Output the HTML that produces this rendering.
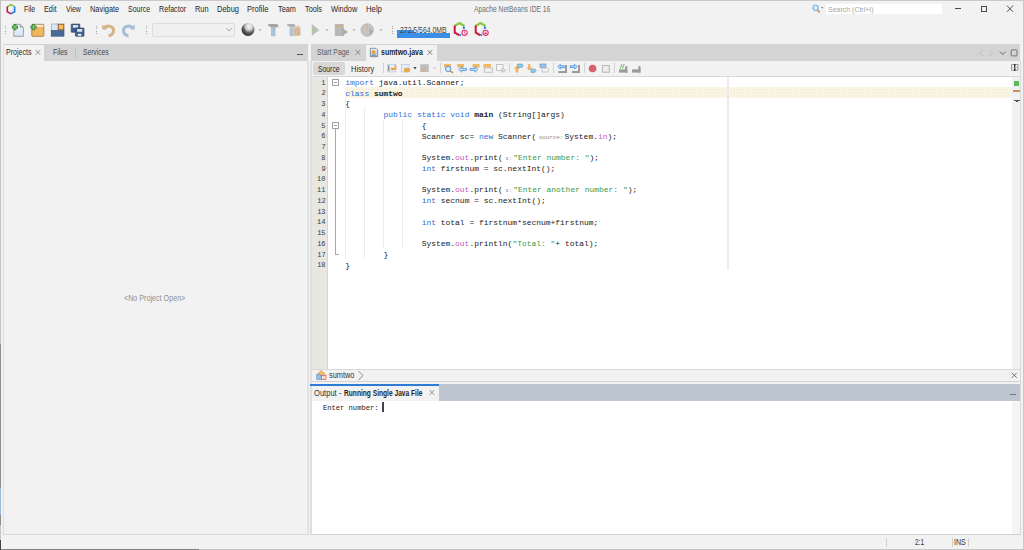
<!DOCTYPE html>
<html><head><meta charset="utf-8">
<style>
*{margin:0;padding:0;box-sizing:border-box}
html,body{width:1024px;height:550px;overflow:hidden;background:#f2f2f2;font-family:"Liberation Sans",sans-serif;color:#222;position:relative}
.a{position:absolute}
.t{position:absolute;white-space:pre}
svg{position:absolute;overflow:visible}
</style></head><body>
<div class="a" style="left:0px;top:0px;width:1024px;height:1px;background:#cacaca;"></div>
<div class="a" style="left:0px;top:0px;width:1px;height:550px;background:#c4c4c4;"></div>
<div class="a" style="left:1023px;top:0px;width:1px;height:550px;background:#c8c8c8;"></div>
<div class="a" style="left:0px;top:549px;width:199px;height:1px;background:#828282;"></div>
<div class="a" style="left:199px;top:549px;width:825px;height:1px;background:#c4c4c4;"></div>
<div class="a" style="left:0px;top:344px;width:1px;height:144px;background:#8e8e8e;"></div>
<div class="a" style="left:0px;top:488px;width:1px;height:27px;background:#9cbad8;"></div>
<div class="a" style="left:0px;top:515px;width:1px;height:10px;background:#8a8a8a;"></div>
<div class="a" style="left:0px;top:540px;width:1px;height:10px;background:#404048;"></div>
<svg style="left:5.5px;top:3px" width="10" height="12" viewBox="0 0 10 12">
<path d="M1.9 4.6 L5 2.8 L8.1 4.6 L8.1 8.4 L5 10.2 L1.9 8.4Z" fill="#f4f6f8"/>
<path d="M5 6.5 L8.1 4.6 L8.1 8.4 L5 10.2Z" fill="#dbe8f4"/>
<path d="M1.3 3.9 L5 1.6 L8.7 3.9" stroke="#8dc63f" stroke-width="1.7" fill="none" stroke-linejoin="round"/>
<path d="M1.3 3.6 L1.3 8.7 L5.2 10.9" stroke="#d2143c" stroke-width="1.6" fill="none"/>
<path d="M8.7 3.6 L8.7 8.7 L4.8 10.9" stroke="#2a7fdc" stroke-width="1.6" fill="none"/>
</svg>
<div class="t" style="left:24.33px;top:6.00px;font-size:8.2px;line-height:8.2px;color:#262626;font-family:'Liberation Sans',sans-serif;transform:scaleX(0.8453);transform-origin:0 0;">File</div>
<div class="t" style="left:44.20px;top:6.00px;font-size:8.2px;line-height:8.2px;color:#262626;font-family:'Liberation Sans',sans-serif;transform:scaleX(0.8871);transform-origin:0 0;">Edit</div>
<div class="t" style="left:66.27px;top:6.00px;font-size:8.2px;line-height:8.2px;color:#262626;font-family:'Liberation Sans',sans-serif;transform:scaleX(0.8338);transform-origin:0 0;">View</div>
<div class="t" style="left:90.09px;top:6.00px;font-size:8.2px;line-height:8.2px;color:#262626;font-family:'Liberation Sans',sans-serif;transform:scaleX(0.9035);transform-origin:0 0;">Navigate</div>
<div class="t" style="left:128.09px;top:6.00px;font-size:8.2px;line-height:8.2px;color:#262626;font-family:'Liberation Sans',sans-serif;transform:scaleX(0.8513);transform-origin:0 0;">Source</div>
<div class="t" style="left:159.01px;top:6.00px;font-size:8.2px;line-height:8.2px;color:#262626;font-family:'Liberation Sans',sans-serif;transform:scaleX(0.8744);transform-origin:0 0;">Refactor</div>
<div class="t" style="left:194.79px;top:6.00px;font-size:8.2px;line-height:8.2px;color:#262626;font-family:'Liberation Sans',sans-serif;transform:scaleX(0.9031);transform-origin:0 0;">Run</div>
<div class="t" style="left:216.99px;top:6.00px;font-size:8.2px;line-height:8.2px;color:#262626;font-family:'Liberation Sans',sans-serif;transform:scaleX(0.9103);transform-origin:0 0;">Debug</div>
<div class="t" style="left:247.28px;top:6.00px;font-size:8.2px;line-height:8.2px;color:#262626;font-family:'Liberation Sans',sans-serif;transform:scaleX(0.9232);transform-origin:0 0;">Profile</div>
<div class="t" style="left:277.94px;top:6.00px;font-size:8.2px;line-height:8.2px;color:#262626;font-family:'Liberation Sans',sans-serif;transform:scaleX(0.8896);transform-origin:0 0;">Team</div>
<div class="t" style="left:304.74px;top:6.00px;font-size:8.2px;line-height:8.2px;color:#262626;font-family:'Liberation Sans',sans-serif;transform:scaleX(0.8895);transform-origin:0 0;">Tools</div>
<div class="t" style="left:330.87px;top:6.00px;font-size:8.2px;line-height:8.2px;color:#262626;font-family:'Liberation Sans',sans-serif;transform:scaleX(0.9019);transform-origin:0 0;">Window</div>
<div class="t" style="left:365.96px;top:6.00px;font-size:8.2px;line-height:8.2px;color:#262626;font-family:'Liberation Sans',sans-serif;transform:scaleX(0.9458);transform-origin:0 0;">Help</div>
<div class="t" style="left:473.99px;top:6.00px;font-size:8.2px;line-height:8.2px;color:#6e6e6e;font-family:'Liberation Sans',sans-serif;transform:scaleX(0.8175);transform-origin:0 0;">Apache NetBeans IDE 16</div>
<div class="a" style="left:826px;top:4px;width:116px;height:10px;background:#ffffff;"></div>
<div class="t" style="left:827.99px;top:6.00px;font-size:7.4px;line-height:7.4px;color:#a4a4a4;font-family:'Liberation Sans',sans-serif;transform:scaleX(0.9445);transform-origin:0 0;">Search (Ctrl+I)</div>
<svg style="left:811px;top:4px" width="14" height="10" viewBox="0 0 14 10">
<circle cx="4.6" cy="3.8" r="2.8" fill="#d6e8fa" stroke="#5c9de4" stroke-width="0.9"/>
<path d="M6.6 6 L8.6 8.4" stroke="#cc8a44" stroke-width="1.6"/>
<path d="M10.3 3.3 L12.2 3.3 L11.25 4.4Z" fill="#333"/>
</svg>
<div class="a" style="left:955px;top:8px;width:6px;height:1px;background:#484848;"></div>
<div class="a" style="left:981px;top:6px;width:6px;height:6px;border:1px solid #484848"></div>
<svg style="left:1006px;top:5px" width="8" height="8" viewBox="0 0 8 8">
<path d="M0.9 0.6 L7.1 6.9 M7.1 0.6 L0.9 6.9" stroke="#484848" stroke-width="0.95"/></svg>
<div class="a" style="left:5px;top:26px;width:1px;height:1px;background:#a4a4a4"></div>
<div class="a" style="left:5px;top:28.4px;width:1px;height:1px;background:#a4a4a4"></div>
<div class="a" style="left:5px;top:30.8px;width:1px;height:1px;background:#a4a4a4"></div>
<div class="a" style="left:5px;top:33.2px;width:1px;height:1px;background:#a4a4a4"></div>
<div class="a" style="left:96px;top:26px;width:1px;height:1px;background:#a4a4a4"></div>
<div class="a" style="left:96px;top:28.4px;width:1px;height:1px;background:#a4a4a4"></div>
<div class="a" style="left:96px;top:30.8px;width:1px;height:1px;background:#a4a4a4"></div>
<div class="a" style="left:96px;top:33.2px;width:1px;height:1px;background:#a4a4a4"></div>
<div class="a" style="left:146px;top:26px;width:1px;height:1px;background:#a4a4a4"></div>
<div class="a" style="left:146px;top:28.4px;width:1px;height:1px;background:#a4a4a4"></div>
<div class="a" style="left:146px;top:30.8px;width:1px;height:1px;background:#a4a4a4"></div>
<div class="a" style="left:146px;top:33.2px;width:1px;height:1px;background:#a4a4a4"></div>
<div class="a" style="left:392px;top:26px;width:1px;height:1px;background:#a4a4a4"></div>
<div class="a" style="left:392px;top:28.4px;width:1px;height:1px;background:#a4a4a4"></div>
<div class="a" style="left:392px;top:30.8px;width:1px;height:1px;background:#a4a4a4"></div>
<div class="a" style="left:392px;top:33.2px;width:1px;height:1px;background:#a4a4a4"></div>
<svg style="left:11px;top:23px" width="14" height="14" viewBox="0 0 14 14">
<defs><linearGradient id="nd" x1="0" y1="0" x2="0" y2="1"><stop offset="0" stop-color="#f4f8fc"/><stop offset="1" stop-color="#d4e4f4"/></linearGradient></defs>
<path d="M2.8 1.3 L9.3 1.3 L12.3 4.3 L12.3 13.3 L2.8 13.3Z" fill="url(#nd)" stroke="#8c98a6" stroke-width="0.9"/>
<path d="M9.3 1.3 L9.3 4.3 L12.3 4.3" fill="#b8c6d6" stroke="#8c98a6" stroke-width="0.7"/>
<path d="M4 1 L4 7.2 M0.9 4.1 L7.1 4.1" stroke="#2f7f3a" stroke-width="2.6"/><path d="M4 1.8 L4 6.4 M1.7 4.1 L6.3 4.1" stroke="#8fd860" stroke-width="1"/>
</svg>
<svg style="left:29px;top:23px" width="16" height="14" viewBox="0 0 16 14">
<rect x="2.8" y="1.3" width="12" height="12" rx="0.8" fill="#f2b75e" stroke="#a57a4a" stroke-width="0.9"/>
<rect x="3.4" y="1.8" width="11" height="2.2" fill="#f6ead0"/>
<path d="M4.5 1 L4.5 7.2 M1.4 4.1 L7.6 4.1" stroke="#2f7f3a" stroke-width="2.6"/><path d="M4.5 1.8 L4.5 6.4 M2.2 4.1 L6.8 4.1" stroke="#8fd860" stroke-width="1"/>
</svg>
<svg style="left:50px;top:23px" width="15" height="14" viewBox="0 0 15 14">
<rect x="1.5" y="1" width="7" height="7" fill="#d8e8f8" stroke="#9aaabb" stroke-width="0.7"/>
<rect x="8.2" y="1.2" width="5.6" height="5.6" fill="#f4c060" stroke="#8a5a30" stroke-width="1"/>
<rect x="1.2" y="7.6" width="12.8" height="5.6" fill="#4a6a98" stroke="#344f78" stroke-width="0.6"/>
</svg>
<svg style="left:70px;top:23px" width="16" height="14" viewBox="0 0 16 14">
<rect x="1.2" y="1" width="8.6" height="8.3" rx="0.6" fill="#3d5f8f" stroke="#2a3f60" stroke-width="0.6"/>
<rect x="2.9" y="2.1" width="5.2" height="2.6" fill="#e6e6e6"/>
<rect x="5.4" y="5" width="8.6" height="8.3" rx="0.6" fill="#3d5f8f" stroke="#2a3f60" stroke-width="0.6"/>
<rect x="7.1" y="6.1" width="5.2" height="2.6" fill="#e6e6e6"/>
<rect x="7.8" y="10.8" width="3.5" height="2" fill="#f0f0f0"/>
</svg>
<svg style="left:101px;top:23px" width="15" height="14" viewBox="0 0 15 14">
<path d="M1.2 1.6 L1.2 6.6 L6.2 6.6" fill="#d6b48a"/>
<path d="M2.5 5.2 C6 2 12.5 2.5 12.5 7.5 C12.5 10.5 10.5 12.5 7.5 12.5" stroke="#d6b48a" stroke-width="3.2" fill="none"/>
</svg>
<svg style="left:121px;top:23px" width="15" height="14" viewBox="0 0 15 14">
<path d="M13.8 1.6 L13.8 6.6 L8.8 6.6" fill="#a9bdd4"/>
<path d="M12.5 5.2 C9 2 2.5 2.5 2.5 7.5 C2.5 10.5 4.5 12.5 7.5 12.5" stroke="#a9bdd4" stroke-width="3.2" fill="none"/>
</svg>
<div class="a" style="left:152px;top:23px;width:83px;height:14px;border:1px solid #dcdcdc;border-radius:2px;background:#f0f0f0"></div>
<svg style="left:225px;top:27px" width="8" height="5" viewBox="0 0 8 5"><path d="M1.2 1.2 L4 3.8 L6.8 1.2" stroke="#8a8a8a" stroke-width="0.8" fill="none"/></svg>
<svg style="left:241px;top:22px" width="15" height="15" viewBox="0 0 15 15">
<defs><radialGradient id="gl" cx="0.58" cy="0.28" r="0.8"><stop offset="0" stop-color="#fafafa"/><stop offset="0.3" stop-color="#d4d4d4"/><stop offset="0.62" stop-color="#5a5a5a"/><stop offset="1" stop-color="#1c1c1c"/></radialGradient></defs>
<circle cx="7" cy="7.5" r="6.5" fill="url(#gl)"/>
<path d="M2 6 C3 8 4 9 3.5 11" stroke="#3a3a3a" stroke-width="1.2" fill="none" opacity="0.6"/>
</svg>
<svg style="left:257.5px;top:28.5px" width="4" height="3" viewBox="0 0 4 3"><path d="M0.3 0.3 L3.7 0.3 L2 2.2Z" fill="#b4b4b4"/></svg>
<svg style="left:267px;top:23px" width="13" height="14" viewBox="0 0 13 14">
<path d="M1.5 1 L9.5 1 C11 1 11.6 2.5 11.4 4.6 L10.2 4 L8.6 4.2 L8.6 4.8 L3.6 4.8 L3.6 3.6 C2 3.6 1 3.2 1 2.2Z" fill="#a4a4a4"/>
<rect x="4" y="4.6" width="4.5" height="8.6" fill="#a8c0d8"/>
<rect x="4" y="4.6" width="4.5" height="1.4" fill="#b8b8b8"/>
</svg>
<svg style="left:286px;top:23px" width="16" height="14" viewBox="0 0 16 14">
<path d="M1.5 1 L8 1 C9 1 9.5 2 9.4 3.6 L8 4.6 L3.4 4.6 L3.4 3.4 C2 3.4 1 3 1 2Z" fill="#b0b0b0"/>
<rect x="3.6" y="4.6" width="4" height="8.6" fill="#aec2d6"/>
<path d="M7.2 5 L12.5 2.6 L14.4 4.4 L14.6 12.6 L8 13.2 Z" fill="#dcc4a4"/>
<path d="M9 6 L10 12 M11 5 L12 12 M13 5 L13.4 12" stroke="#c8a478" stroke-width="0.7"/>
</svg>
<svg style="left:311px;top:23px" width="9" height="14" viewBox="0 0 9 14">
<path d="M0.8 1 L8.2 7 L0.8 13Z" fill="#bdbdbd"/><path d="M1.6 4 L5 7 L1.6 10Z" fill="#a6d28a"/></svg>
<svg style="left:324.5px;top:28.5px" width="4" height="3" viewBox="0 0 4 3"><path d="M0.3 0.3 L3.7 0.3 L2 2.2Z" fill="#b4b4b4"/></svg>
<svg style="left:334px;top:23px" width="15" height="14" viewBox="0 0 15 14">
<rect x="0.8" y="1" width="9" height="12" fill="#b8b8b8"/>
<rect x="2" y="3" width="2.8" height="1" fill="#d8a860"/><rect x="6" y="3" width="2.8" height="1" fill="#d8a860"/>
<path d="M8 5 L14 9 L8 13Z" fill="#a8a8a8"/><circle cx="10" cy="9" r="1" fill="#9bd27a"/></svg>
<svg style="left:351.5px;top:28.5px" width="4" height="3" viewBox="0 0 4 3"><path d="M0.3 0.3 L3.7 0.3 L2 2.2Z" fill="#b4b4b4"/></svg>
<svg style="left:360px;top:23px" width="15" height="14" viewBox="0 0 15 14">
<circle cx="7.2" cy="7" r="6.3" fill="#c4c4c4" stroke="#aaaaaa" stroke-width="0.6"/>
<path d="M7 1 L7 7" stroke="#d8b080" stroke-width="1"/>
<path d="M9.5 5 L13 8.5 L9.5 12Z" fill="#a8a8a8"/></svg>
<svg style="left:378.5px;top:28.5px" width="4" height="3" viewBox="0 0 4 3"><path d="M0.3 0.3 L3.7 0.3 L2 2.2Z" fill="#b4b4b4"/></svg>
<div class="a" style="left:397px;top:30px;width:17px;height:8px;background:#3a8ee8;"></div>
<div class="a" style="left:414px;top:33px;width:36px;height:5px;background:#3a8ee8;"></div>
<div class="t" style="left:400.36px;top:27.00px;font-size:8.2px;line-height:8.2px;color:#464646;font-family:'Liberation Sans',sans-serif;transform:scaleX(0.8377);transform-origin:0 0;">272.5/564.0MB</div>
<svg style="left:453px;top:21px" width="16" height="16" viewBox="0 0 16 16">
<path d="M2.2 5.2 L6.5 2.6 L10.8 5.2 L10.8 11.4 L6.5 14 L2.2 11.4Z" fill="#f8f8f4"/>
<path d="M6.5 8.2 L10.8 5.2 L10.8 11.4 L6.5 14Z" fill="#e4eef8"/>
<path d="M1.6 5 L6.5 2.1 L11.4 5" stroke="#8dc63f" stroke-width="2.3" fill="none" stroke-linejoin="round"/>
<path d="M1.7 4.6 L1.7 11.6 L6.6 14.4" stroke="#d2143c" stroke-width="2" fill="none"/>
<path d="M10.9 5.6 L10.9 8" stroke="#2a7fdc" stroke-width="1.8" fill="none"/>
<path d="M6.6 14.4 L8 13.6" stroke="#2a8ff0" stroke-width="1.8" fill="none"/>
<circle cx="11.6" cy="11.8" r="2.6" fill="#fff" stroke="#e0306a" stroke-width="1.1"/>
<path d="M11.4 10.2 L11.4 12 L12.8 12.8" stroke="#e0306a" stroke-width="0.8" fill="none"/>
</svg>
<svg style="left:474px;top:21px" width="16" height="16" viewBox="0 0 16 16">
<path d="M2.2 5.2 L6.5 2.6 L10.8 5.2 L10.8 11.4 L6.5 14 L2.2 11.4Z" fill="#f8f8f4"/>
<path d="M6.5 8.2 L10.8 5.2 L10.8 11.4 L6.5 14Z" fill="#e4eef8"/>
<path d="M1.6 5 L6.5 2.1 L11.4 5" stroke="#8dc63f" stroke-width="2.3" fill="none" stroke-linejoin="round"/>
<path d="M1.7 4.6 L1.7 11.6 L6.6 14.4" stroke="#d2143c" stroke-width="2" fill="none"/>
<path d="M10.9 5.6 L10.9 8" stroke="#2a7fdc" stroke-width="1.8" fill="none"/>
<path d="M6.6 14.4 L8 13.6" stroke="#2a8ff0" stroke-width="1.8" fill="none"/>
<circle cx="11.6" cy="11.8" r="2.6" fill="#fff" stroke="#e0306a" stroke-width="1.1"/>
<circle cx="11.6" cy="11.8" r="1.6" fill="#f4a0bc"/><rect x="10.6" y="12" width="2" height="1" fill="#e0306a"/>
</svg>
<div class="a" style="left:3px;top:44px;width:305px;height:17px;background:#d4d4d4;"></div>
<div class="a" style="left:3px;top:45px;width:41px;height:16px;background:#f2f2f2;"></div>
<div class="a" style="left:3px;top:44px;width:1px;height:491px;background:#dcdede;"></div>
<div class="a" style="left:307px;top:61px;width:2px;height:474px;background:#e1e3e3;"></div>
<div class="a" style="left:3px;top:534px;width:306px;height:1px;background:#d8d8d8;"></div>
<div class="t" style="left:6.22px;top:49.00px;font-size:8.2px;line-height:8.2px;color:#262626;font-family:'Liberation Sans',sans-serif;transform:scaleX(0.8586);transform-origin:0 0;">Projects</div>
<svg style="left:35px;top:49px" width="6" height="7" viewBox="0 0 6 7"><path d="M0.6 1 L5.2 5.8 M5.2 1 L0.6 5.8" stroke="#777" stroke-width="0.8"/></svg>
<div class="t" style="left:52.74px;top:49.00px;font-size:8.2px;line-height:8.2px;color:#454545;font-family:'Liberation Sans',sans-serif;transform:scaleX(0.8379);transform-origin:0 0;">Files</div>
<div class="a" style="left:75px;top:47px;width:1px;height:11px;background:#c0c0c0;"></div>
<div class="t" style="left:83.11px;top:49.00px;font-size:8.2px;line-height:8.2px;color:#454545;font-family:'Liberation Sans',sans-serif;transform:scaleX(0.8121);transform-origin:0 0;">Services</div>
<div class="a" style="left:297px;top:54px;width:6px;height:1px;background:#555555;"></div>
<div class="t" style="left:124.26px;top:295.00px;font-size:8.2px;line-height:8.2px;color:#909090;font-family:'Liberation Sans',sans-serif;transform:scaleX(0.8746);transform-origin:0 0;">&lt;No Project Open&gt;</div>
<div class="a" style="left:311px;top:44px;width:709px;height:17px;background:#d4d4d4;"></div>
<div class="a" style="left:366px;top:45px;width:71px;height:16px;background:#f2f2f2;"></div>
<div class="t" style="left:317.30px;top:49.00px;font-size:8.2px;line-height:8.2px;color:#5a5a5a;font-family:'Liberation Sans',sans-serif;transform:scaleX(0.8361);transform-origin:0 0;">Start Page</div>
<svg style="left:355px;top:49px" width="6" height="7" viewBox="0 0 6 7"><path d="M0.6 1 L5.2 5.8 M5.2 1 L0.6 5.8" stroke="#777" stroke-width="0.8"/></svg>
<svg style="left:369px;top:47px" width="10" height="11" viewBox="0 0 10 11">
<defs><linearGradient id="fg" x1="0" y1="0" x2="0" y2="1"><stop offset="0" stop-color="#eef4fa"/><stop offset="1" stop-color="#9fbcd8"/></linearGradient></defs>
<path d="M1.3 1.3 L7 1.3 L8.7 3 L8.7 9.7 L1.3 9.7Z" fill="url(#fg)" stroke="#6f7a88" stroke-width="0.8"/>
<path d="M3 4.5 C3 3 5.5 3 6 4 C7 5 6.5 7.5 4.8 7.5 C3.5 7.5 3 6 3 4.5Z" fill="#e8a038"/>
<path d="M2.5 7.8 L7 7.8 L6.5 8.8 L3 8.8Z" fill="#5a8ac0"/>
</svg>
<div class="t" style="left:381.36px;top:49.00px;font-size:8.2px;line-height:8.2px;color:#1e1e1e;font-family:'Liberation Sans',sans-serif;font-weight:bold;transform:scaleX(0.8510);transform-origin:0 0;">sumtwo.java</div>
<svg style="left:427px;top:49px" width="6" height="7" viewBox="0 0 6 7"><path d="M0.6 1 L5.2 5.8 M5.2 1 L0.6 5.8" stroke="#666" stroke-width="0.8"/></svg>
<svg style="left:978px;top:48px" width="42" height="10" viewBox="0 0 42 10">
<path d="M5 2 L2 5 L5 8" stroke="#b8b8b8" stroke-width="0.8" fill="none"/>
<path d="M11.5 2 L14.5 5 L11.5 8" stroke="#b8b8b8" stroke-width="0.8" fill="none"/>
<path d="M21.8 3.5 L24.8 6.5 L27.8 3.5" stroke="#555" stroke-width="0.9" fill="none"/>
<rect x="33.2" y="1.9" width="5.8" height="6" rx="0.6" fill="none" stroke="#6a6a6a" stroke-width="0.9"/>
</svg>
<div class="a" style="left:313px;top:62px;width:32px;height:13px;background:#d8d8d8;border-radius:2px"></div>
<div class="t" style="left:317.70px;top:66.00px;font-size:8.2px;line-height:8.2px;color:#2a2a2a;font-family:'Liberation Sans',sans-serif;transform:scaleX(0.8315);transform-origin:0 0;">Source</div>
<div class="t" style="left:351.29px;top:66.00px;font-size:8.2px;line-height:8.2px;color:#2a2a2a;font-family:'Liberation Sans',sans-serif;transform:scaleX(0.9102);transform-origin:0 0;">History</div>
<div class="a" style="left:311px;top:76px;width:709px;height:1px;background:#d8d8d8;"></div>
<div class="a" style="left:311px;top:77px;width:709px;height:292px;background:#ffffff;"></div>
<div class="a" style="left:312px;top:77px;width:15px;height:292px;background:#e8e7e2;"></div>
<div class="a" style="left:327px;top:77px;width:1px;height:292px;background:#d6d6d6;"></div>
<div class="a" style="left:383px;top:63px;width:1px;height:10px;background:#d2d2d2;"></div>
<div class="a" style="left:440px;top:63px;width:1px;height:10px;background:#d2d2d2;"></div>
<div class="a" style="left:509px;top:63px;width:1px;height:10px;background:#d2d2d2;"></div>
<div class="a" style="left:553px;top:63px;width:1px;height:10px;background:#d2d2d2;"></div>
<div class="a" style="left:584px;top:63px;width:1px;height:10px;background:#d2d2d2;"></div>
<div class="a" style="left:614px;top:63px;width:1px;height:10px;background:#d2d2d2;"></div>
<svg style="left:386px;top:63px" width="260" height="11" viewBox="386 63 260 11">
<!-- 1 -->
<rect x="387.3" y="64.3" width="8.5" height="7.6" fill="#e6f0fa" stroke="#a8c4e4" stroke-width="0.6"/>
<rect x="388.4" y="65.5" width="0.9" height="5.4" fill="#555"/>
<path d="M395.4 65 L395.4 69 L391.6 69" stroke="#eaa84a" stroke-width="1.8" fill="none"/>
<path d="M390.3 69 L392.6 67 L392.6 71Z" fill="#eaa84a"/>
<!-- 2 -->
<rect x="401.3" y="64.3" width="7.6" height="7.6" fill="#e6f0fa" stroke="#a8c4e4" stroke-width="0.6"/>
<ellipse cx="407" cy="70" rx="3.2" ry="2.3" fill="#eaa84a"/>
<path d="M413.4 67 L416.6 67 L415 69.4Z" fill="#444"/>
<!-- 3 -->
<rect x="420.2" y="64.2" width="8.6" height="7.8" fill="#bdbdbd"/>
<ellipse cx="423.5" cy="70" rx="2.6" ry="2" fill="#c8b49a"/>
<path d="M433 67.4 L436 67.4 L434.5 69.4Z" fill="#c4c4c4"/>
<!-- 4 find -->
<rect x="444" y="64" width="7" height="3.4" fill="#f0b860"/>
<circle cx="448.2" cy="68.9" r="2.7" fill="#d8e8fa" stroke="#4a90e2" stroke-width="1"/>
<path d="M450.2 70.9 L453 73" stroke="#d08a40" stroke-width="1.4"/>
<!-- 5 prev -->
<rect x="457.2" y="64" width="6.8" height="3.4" fill="#f0b860"/>
<path d="M458.8 69.4 L461.8 66.6 L461.8 68.4 L466.6 68.4 L466.6 70.4 L461.8 70.4 L461.8 72.2Z" fill="#cfe2f8" stroke="#4a90e2" stroke-width="0.8"/>
<!-- 6 next -->
<rect x="472.6" y="64" width="7" height="3.4" fill="#f0b860"/>
<path d="M478 69.4 L475 66.6 L475 68.4 L470.2 68.4 L470.2 70.4 L475 70.4 L475 72.2Z" fill="#cfe2f8" stroke="#4a90e2" stroke-width="0.8"/>
<!-- 7 -->
<rect x="483.4" y="64" width="7.5" height="3.4" fill="#f0b860"/>
<rect x="484.3" y="68" width="8" height="4.2" fill="#f4f4f4" stroke="#b4b4b4" stroke-width="0.8"/>
<!-- 8 -->
<rect x="496.6" y="64.5" width="6.4" height="6" fill="#f6f6f6" stroke="#b8b8b8" stroke-width="0.8"/>
<path d="M502 68.4 L505.8 70.4 L502 72.3Z" fill="#f6f6f6" stroke="#a8a8a8" stroke-width="0.7"/>
<!-- 9 -->
<path d="M517 65.5 L520.2 68.7 L518.3 68.7 L518.3 72.5 L515.7 72.5 L515.7 68.7 L513.8 68.7Z" fill="#f0b060"/>
<path d="M517.5 64 L522 64 L523.2 65.7 L522 67.4 L517.5 67.4Z" fill="#8ccbe0" stroke="#5a8ac8" stroke-width="0.5"/>
<!-- 10 -->
<path d="M529.3 70.5 L532 67.6 L530.4 67.6 L530.4 64 L528.2 64 L528.2 67.6 L526.6 67.6Z" fill="#f0b060"/>
<path d="M531 69 L535 69 L536.2 70.7 L535 72.4 L531 72.4Z" fill="#8ccbe0" stroke="#5a8ac8" stroke-width="0.5"/>
<!-- 11 -->
<rect x="540" y="64" width="6" height="3.4" fill="#9cc8e8" stroke="#4a7ab8" stroke-width="0.5"/>
<path d="M542 68 L547.4 68 L549.2 70 L547.4 72 L542 72Z" fill="#f4f4f4" stroke="#b0b0b0" stroke-width="0.7"/>
<!-- 12 -->
<path d="M557.8 66.6 L560.4 64.4 L560.4 65.8 L564.2 65.8 L564.2 67.6 L560.4 67.6 L560.4 69Z" fill="#cfe2f8" stroke="#3a86e0" stroke-width="0.8"/>
<rect x="565" y="65" width="2" height="8" fill="#9a9a9a"/><rect x="558.4" y="71" width="8.6" height="2" fill="#9a9a9a"/>
<!-- 13 -->
<path d="M577.1 66.6 L574.5 64.4 L574.5 65.8 L570.2 65.8 L570.2 67.6 L574.5 67.6 L574.5 69Z" fill="#cfe2f8" stroke="#3a86e0" stroke-width="0.8"/>
<rect x="578" y="65" width="2" height="8" fill="#9a9a9a"/><rect x="572" y="71" width="8" height="2" fill="#9a9a9a"/>
<!-- 14 -->
<circle cx="592.6" cy="68.5" r="3.8" fill="#d9616a"/>
<!-- 15 -->
<rect x="602.3" y="65.5" width="7" height="6.7" fill="#ececec" stroke="#b0b0b0" stroke-width="0.9"/>
<!-- 16 -->
<path d="M620.2 68.5 L622 64.2 M622.4 68.5 L624.2 64.2" stroke="#5cb85c" stroke-width="1"/>
<rect x="625.1" y="66.2" width="2.2" height="6.4" fill="#9a9a9a"/><rect x="619" y="69.4" width="8.3" height="3.2" fill="#9a9a9a"/>
<!-- 17 -->
<rect x="638.3" y="66.2" width="2.2" height="6.4" fill="#9a9a9a"/><rect x="632" y="69.4" width="8.5" height="3.2" fill="#9a9a9a"/>
</svg>
<svg style="left:1011px;top:64px" width="8" height="8" viewBox="0 0 8 8">
<rect x="0.6" y="0.6" width="6.3" height="5.6" fill="#f8f8f8" stroke="#8a8a8a" stroke-width="0.9"/>
<path d="M3.75 0 L3.75 7" stroke="#222" stroke-width="1.3"/><path d="M0.5 3.4 L7 3.4" stroke="#aaa" stroke-width="0.7"/></svg>
<div class="a" style="left:345px;top:87px;width:667px;height:11px;background:#faf4e2;background-image:radial-gradient(circle,#efe9da 0.6px,transparent 0.9px);background-size:3px 3px;background-position:1px 1px"></div>
<div class="a" style="left:727px;top:77px;width:2px;height:193px;background:#f3e6f3;"></div>
<div class="a" style="left:345px;top:98px;width:1px;height:161px;background:#ececec"></div>
<div class="a" style="left:364px;top:108px;width:1px;height:151px;background:#ececec"></div>
<div class="a" style="left:383px;top:119px;width:1px;height:129px;background:#ececec"></div>
<div class="a" style="left:402px;top:119px;width:1px;height:129px;background:#ececec"></div>
<div class="t" style="left:345.3px;top:79.00px;font-family:'Liberation Mono',monospace;font-size:7.96px;line-height:7.96px;color:#1a1a1a"><span style="color:#2f6fd8">import</span> java.util.Scanner;</div>
<div class="t" style="left:345.3px;top:89.75px;font-family:'Liberation Mono',monospace;font-size:7.96px;line-height:7.96px;color:#1a1a1a"><span style="color:#2f6fd8">class</span> <b>sumtwo</b></div>
<div class="t" style="left:345.3px;top:100.49px;font-family:'Liberation Mono',monospace;font-size:7.96px;line-height:7.96px;color:#1a1a1a">{</div>
<div class="t" style="left:345.3px;top:111.24px;font-family:'Liberation Mono',monospace;font-size:7.96px;line-height:7.96px;color:#1a1a1a">        <span style="color:#2f6fd8">public</span> <span style="color:#2f6fd8">static</span> <span style="color:#2f6fd8">void</span> <b>main</b> (String[]args)</div>
<div class="t" style="left:345.3px;top:121.98px;font-family:'Liberation Mono',monospace;font-size:7.96px;line-height:7.96px;color:#1a1a1a">                {</div>
<div class="t" style="left:345.3px;top:132.73px;font-family:'Liberation Mono',monospace;font-size:7.96px;line-height:7.96px;color:#1a1a1a">                Scanner sc= <span style="color:#2f6fd8">new</span> Scanner(<span style="display:inline-block;width:28.3px;padding-left:2.4px;font-size:5.9px;color:#8a8a8a;vertical-align:baseline">source:</span>System.<span style="color:#c158c8">in</span>);</div>
<div class="t" style="left:345.3px;top:154.22px;font-family:'Liberation Mono',monospace;font-size:7.96px;line-height:7.96px;color:#1a1a1a">                System.<span style="color:#c158c8">out</span>.print(<span style="display:inline-block;width:10.3px;padding-left:2.4px;font-size:5.9px;color:#8a8a8a;vertical-align:baseline">s:</span><span style="color:#3a9a4a">"Enter number: "</span>);</div>
<div class="t" style="left:345.3px;top:164.96px;font-family:'Liberation Mono',monospace;font-size:7.96px;line-height:7.96px;color:#1a1a1a">                <span style="color:#2f6fd8">int</span> firstnum = sc.nextInt();</div>
<div class="t" style="left:345.3px;top:186.45px;font-family:'Liberation Mono',monospace;font-size:7.96px;line-height:7.96px;color:#1a1a1a">                System.<span style="color:#c158c8">out</span>.print(<span style="display:inline-block;width:10.3px;padding-left:2.4px;font-size:5.9px;color:#8a8a8a;vertical-align:baseline">s:</span><span style="color:#3a9a4a">"Enter another number: "</span>);</div>
<div class="t" style="left:345.3px;top:197.20px;font-family:'Liberation Mono',monospace;font-size:7.96px;line-height:7.96px;color:#1a1a1a">                <span style="color:#2f6fd8">int</span> secnum = sc.nextInt();</div>
<div class="t" style="left:345.3px;top:218.69px;font-family:'Liberation Mono',monospace;font-size:7.96px;line-height:7.96px;color:#1a1a1a">                <span style="color:#2f6fd8">int</span> total = firstnum*secnum+firstnum;</div>
<div class="t" style="left:345.3px;top:240.18px;font-family:'Liberation Mono',monospace;font-size:7.96px;line-height:7.96px;color:#1a1a1a">                System.<span style="color:#c158c8">out</span>.println(<span style="color:#3a9a4a">"Total: "</span>+ total);</div>
<div class="t" style="left:345.3px;top:250.92px;font-family:'Liberation Mono',monospace;font-size:7.96px;line-height:7.96px;color:#1a1a1a">        }</div>
<div class="t" style="left:345.3px;top:261.67px;font-family:'Liberation Mono',monospace;font-size:7.96px;line-height:7.96px;color:#1a1a1a">}</div>
<div class="t" style="left:321.24px;top:79.74px;font-family:'Liberation Mono',monospace;font-size:7.0px;line-height:7.0px;color:#3a3a3a">1</div>
<div class="t" style="left:321.39px;top:90.48px;font-family:'Liberation Mono',monospace;font-size:7.0px;line-height:7.0px;color:#3a3a3a">2</div>
<div class="t" style="left:321.33px;top:101.23px;font-family:'Liberation Mono',monospace;font-size:7.0px;line-height:7.0px;color:#3a3a3a">3</div>
<div class="t" style="left:321.25px;top:111.97px;font-family:'Liberation Mono',monospace;font-size:7.0px;line-height:7.0px;color:#3a3a3a">4</div>
<div class="t" style="left:321.33px;top:122.72px;font-family:'Liberation Mono',monospace;font-size:7.0px;line-height:7.0px;color:#3a3a3a">5</div>
<div class="t" style="left:321.35px;top:133.46px;font-family:'Liberation Mono',monospace;font-size:7.0px;line-height:7.0px;color:#3a3a3a">6</div>
<div class="t" style="left:321.45px;top:144.21px;font-family:'Liberation Mono',monospace;font-size:7.0px;line-height:7.0px;color:#3a3a3a">7</div>
<div class="t" style="left:321.35px;top:154.95px;font-family:'Liberation Mono',monospace;font-size:7.0px;line-height:7.0px;color:#3a3a3a">8</div>
<div class="t" style="left:321.38px;top:165.70px;font-family:'Liberation Mono',monospace;font-size:7.0px;line-height:7.0px;color:#3a3a3a">9</div>
<div class="t" style="left:317.12px;top:176.44px;font-family:'Liberation Mono',monospace;font-size:7.0px;line-height:7.0px;color:#3a3a3a">10</div>
<div class="t" style="left:317.04px;top:187.19px;font-family:'Liberation Mono',monospace;font-size:7.0px;line-height:7.0px;color:#3a3a3a">11</div>
<div class="t" style="left:317.19px;top:197.93px;font-family:'Liberation Mono',monospace;font-size:7.0px;line-height:7.0px;color:#3a3a3a">12</div>
<div class="t" style="left:317.13px;top:208.68px;font-family:'Liberation Mono',monospace;font-size:7.0px;line-height:7.0px;color:#3a3a3a">13</div>
<div class="t" style="left:317.05px;top:219.42px;font-family:'Liberation Mono',monospace;font-size:7.0px;line-height:7.0px;color:#3a3a3a">14</div>
<div class="t" style="left:317.13px;top:230.17px;font-family:'Liberation Mono',monospace;font-size:7.0px;line-height:7.0px;color:#3a3a3a">15</div>
<div class="t" style="left:317.15px;top:240.91px;font-family:'Liberation Mono',monospace;font-size:7.0px;line-height:7.0px;color:#3a3a3a">16</div>
<div class="t" style="left:317.25px;top:251.66px;font-family:'Liberation Mono',monospace;font-size:7.0px;line-height:7.0px;color:#3a3a3a">17</div>
<div class="t" style="left:317.15px;top:262.40px;font-family:'Liberation Mono',monospace;font-size:7.0px;line-height:7.0px;color:#3a3a3a">18</div>
<div class="a" style="left:332px;top:79px;width:7px;height:7px;border:0.8px solid #a0a0a0;background:#fff"></div>
<div class="a" style="left:334px;top:82px;width:3px;height:1px;background:#a0a0a0;"></div>
<div class="a" style="left:332px;top:122px;width:7px;height:7px;border:0.8px solid #a0a0a0;background:#fff"></div>
<div class="a" style="left:334px;top:125px;width:3px;height:1px;background:#a0a0a0;"></div>
<div class="a" style="left:335px;top:129px;width:1px;height:126px;background:#a8a8a8;"></div>
<div class="a" style="left:335px;top:254px;width:4px;height:1px;background:#a8a8a8;"></div>
<div class="a" style="left:1012px;top:77px;width:8px;height:292px;background:#f1f1f1;"></div>
<div class="a" style="left:1014px;top:81px;width:5px;height:5px;background:#5cb85c;"></div>
<div class="a" style="left:1013px;top:90px;width:7px;height:2px;background:#c89060;"></div>
<div class="a" style="left:1014px;top:100px;width:6px;height:1px;background:#555;"></div>
<div class="a" style="left:1016px;top:100px;width:2px;height:2px;background:#555;"></div>
<div class="a" style="left:311px;top:369px;width:709px;height:1px;background:#d8d8d8;"></div>
<div class="a" style="left:311px;top:381px;width:709px;height:1px;background:#d4d4d4;"></div>
<svg style="left:316px;top:370px" width="11" height="10" viewBox="0 0 11 10">
<path d="M5 0.3 L9.2 3.8 L6 7.5 L1.6 4.2Z" fill="#f0bc68" stroke="#c89048" stroke-width="0.5"/>
<path d="M0.5 4.5 L4 4 L6 8 L5.5 9.6 L1 9.6 L0.5 8Z" fill="#8ec0ea" stroke="#5a80a8" stroke-width="0.5"/>
<rect x="5.6" y="5.3" width="4.4" height="4.2" fill="#f6dcc0" stroke="#d04060" stroke-width="0.6"/>
</svg>
<div class="t" style="left:329.11px;top:372.00px;font-size:8.2px;line-height:8.2px;color:#333333;font-family:'Liberation Sans',sans-serif;transform:scaleX(0.8984);transform-origin:0 0;">sumtwo</div>
<svg style="left:357px;top:370px" width="8" height="11" viewBox="0 0 8 11"><path d="M1.5 1 L6 5.5 L1.5 10" stroke="#b8b8b8" stroke-width="1.3" fill="none"/></svg>
<svg style="left:1011px;top:372px" width="7" height="7" viewBox="0 0 7 7"><path d="M0.8 0.8 L5.8 5.8 M5.8 0.8 L0.8 5.8" stroke="#555" stroke-width="0.8"/></svg>
<div class="a" style="left:311px;top:384px;width:709px;height:17px;background:#bdc6d0;"></div>
<div class="a" style="left:311px;top:384px;width:128px;height:17px;background:#f2f2f2;"></div>
<div class="a" style="left:311px;top:384px;width:128px;height:2px;background:#2e7bd6;"></div>
<div class="t" style="left:313.95px;top:390.00px;font-size:8.2px;line-height:8.2px;color:#333333;font-family:'Liberation Sans',sans-serif;transform:scaleX(0.9240);transform-origin:0 0;">Output -</div>
<div class="t" style="left:343.56px;top:390.00px;font-size:8.2px;line-height:8.2px;color:#1e1e1e;font-family:'Liberation Sans',sans-serif;font-weight:bold;transform:scaleX(0.8095);transform-origin:0 0;">Running Single Java File</div>
<svg style="left:429px;top:389px" width="6" height="7" viewBox="0 0 6 7"><path d="M0.6 1 L5.2 5.8 M5.2 1 L0.6 5.8" stroke="#777" stroke-width="0.8"/></svg>
<div class="a" style="left:1010px;top:394px;width:6px;height:1px;background:#777777;"></div>
<div class="a" style="left:311px;top:401px;width:709px;height:133px;background:#ffffff;"></div>
<div class="a" style="left:1012px;top:401px;width:8px;height:133px;background:#f4f4f4;"></div>
<div class="t" style="left:323.34px;top:405.00px;font-size:7.2px;line-height:7.2px;color:#222222;font-family:'Liberation Mono',monospace;transform:scaleX(0.9894);transform-origin:0 0;">Enter number:</div>
<div class="a" style="left:382px;top:402px;width:2px;height:10px;background:#444444;"></div>
<div class="a" style="left:311px;top:534px;width:710px;height:1px;background:#d0d0d0;"></div>
<div class="a" style="left:886px;top:538px;width:1px;height:9px;background:#d0d0d0;"></div>
<div class="a" style="left:952px;top:538px;width:1px;height:9px;background:#d0d0d0;"></div>
<div class="a" style="left:968px;top:538px;width:1px;height:9px;background:#d0d0d0;"></div>
<div class="t" style="left:914.87px;top:539.00px;font-size:8.2px;line-height:8.2px;color:#333333;font-family:'Liberation Sans',sans-serif;transform:scaleX(0.7929);transform-origin:0 0;">2:1</div>
<div class="t" style="left:953.84px;top:539.00px;font-size:8.2px;line-height:8.2px;color:#333333;font-family:'Liberation Sans',sans-serif;transform:scaleX(0.8688);transform-origin:0 0;">INS</div>
<div class="a" style="left:310px;top:61px;width:2px;height:474px;background:#dedede;"></div>
<div class="a" style="left:310px;top:384px;width:2px;height:2px;background:#2e7bd6;"></div>
<div class="a" style="left:1020px;top:61px;width:1px;height:474px;background:#d8d8d8;"></div>
</body></html>
